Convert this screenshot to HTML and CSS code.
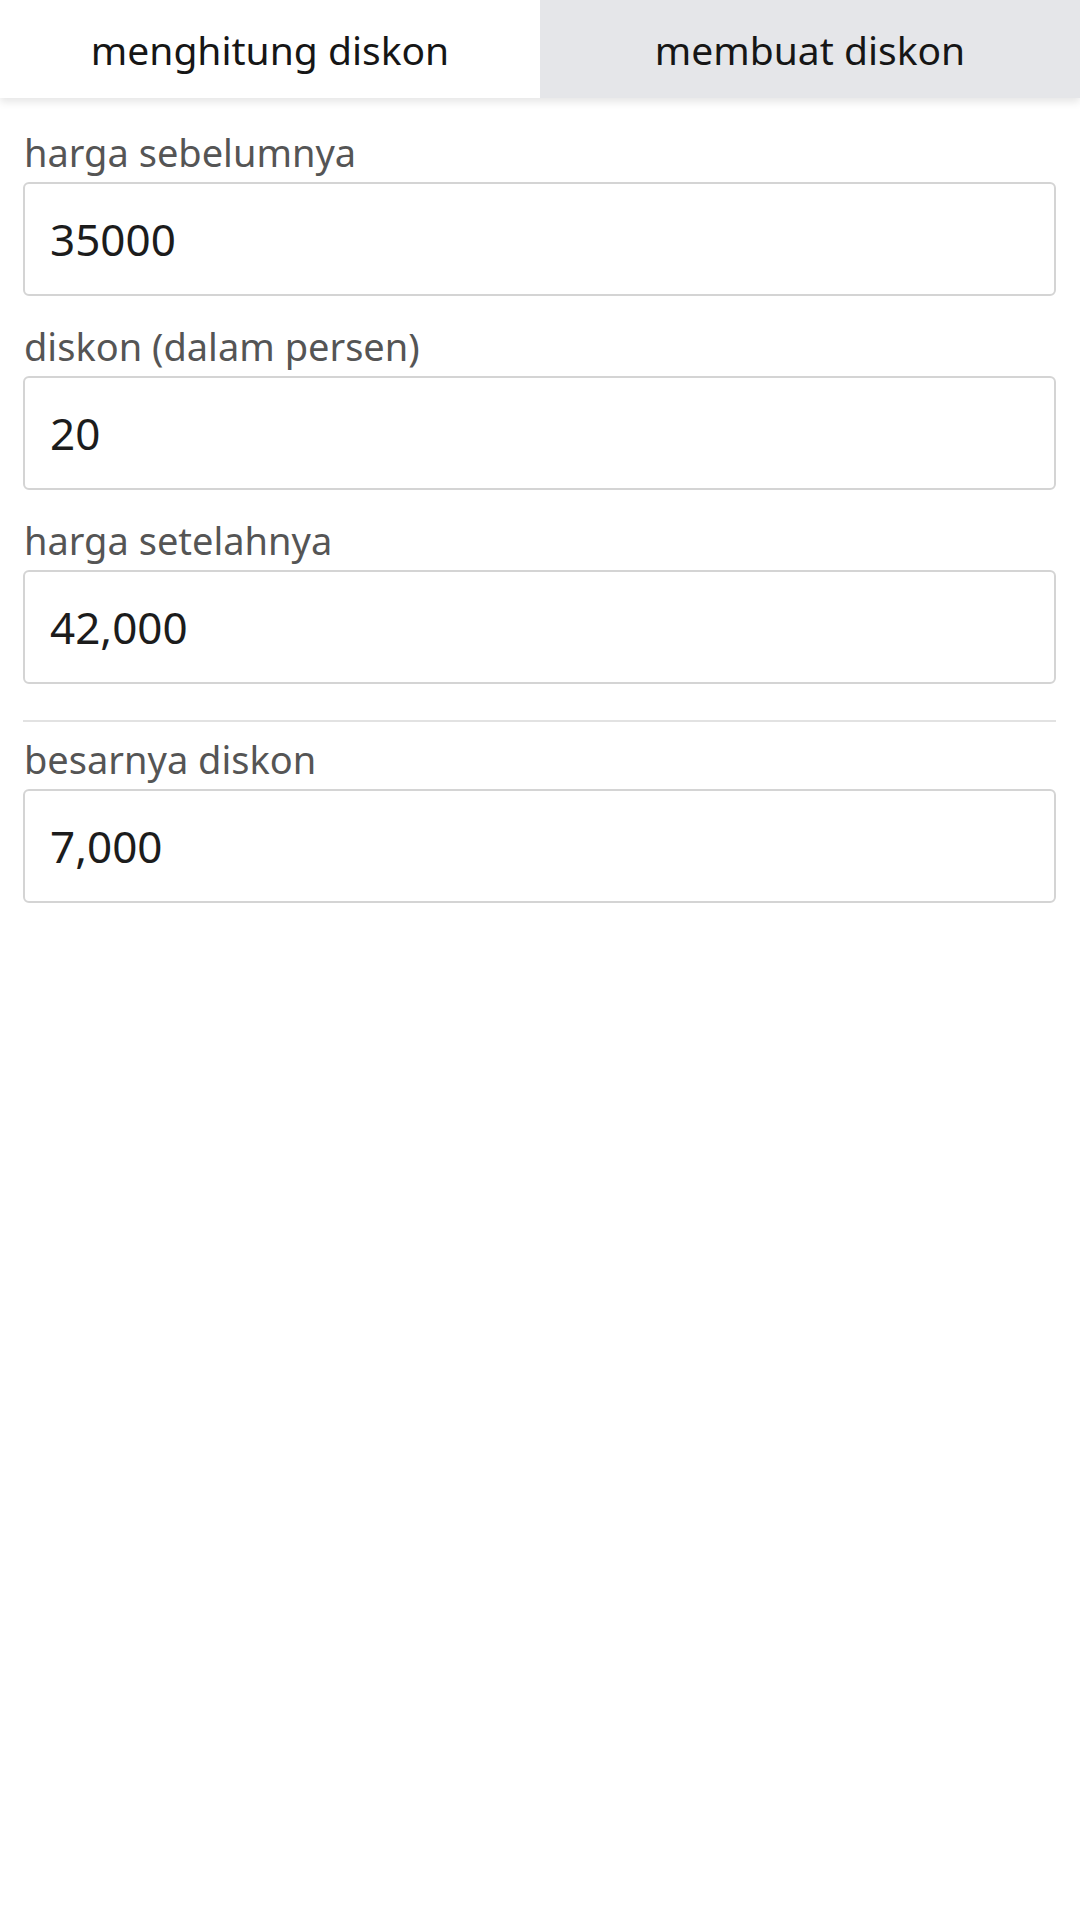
FILE: index.html
```html
<!DOCTYPE html>
<html lang="id">
<head>
<meta charset="utf-8">
<title>Diskon</title>
<link rel="stylesheet" href="styles.css">
</head>
<body>
<nav class="tabs">
  <div class="tab tab-active">menghitung diskon</div>
  <div class="tab">membuat diskon</div>
</nav>
<main class="form">
  <div class="field">
    <label class="label">harga sebelumnya</label>
    <div class="input">35000</div>
  </div>
  <div class="field">
    <label class="label">diskon (dalam persen)</label>
    <div class="input">20</div>
  </div>
  <div class="field">
    <label class="label">harga setelahnya</label>
    <div class="input">42,000</div>
  </div>
  <hr class="divider">
  <div class="field">
    <label class="label">besarnya diskon</label>
    <div class="input">7,000</div>
  </div>
</main>
</body>
</html>
```
FILE: styles.css
```css
html, body {
  margin: 0;
  padding: 0;
  background: #ffffff;
  font-family: "Noto Sans", "Open Sans", sans-serif;
}
.tabs {
  display: flex;
  height: 98px;
  box-shadow: 0 4px 8px rgba(0,0,0,0.10);
}
.tab {
  flex: 1;
  display: flex;
  align-items: center;
  justify-content: center;
  font-size: 39px;
  color: #161616;
  background: #e5e6e9;
}
.tab-active {
  background: #ffffff;
}
.form {
  padding: 32px 24px 0 23px;
  display: flex;
  flex-direction: column;
}
.field {
  display: flex;
  flex-direction: column;
}
.label {
  font-size: 38px;
  color: #555555;
  line-height: 44px;
  padding-left: 1px;
  margin-bottom: 8px;
}
.input {
  height: 110px;
  border: 2px solid #d4d4d4;
  border-radius: 6px;
  display: flex;
  align-items: center;
  padding: 0 25px;
  font-size: 44px;
  color: #1c1c1c;
  margin-bottom: 28px;
}
.divider {
  border: none;
  border-top: 2px solid #e2e2e2;
  margin: 8px 0 15px 0;
}
```
